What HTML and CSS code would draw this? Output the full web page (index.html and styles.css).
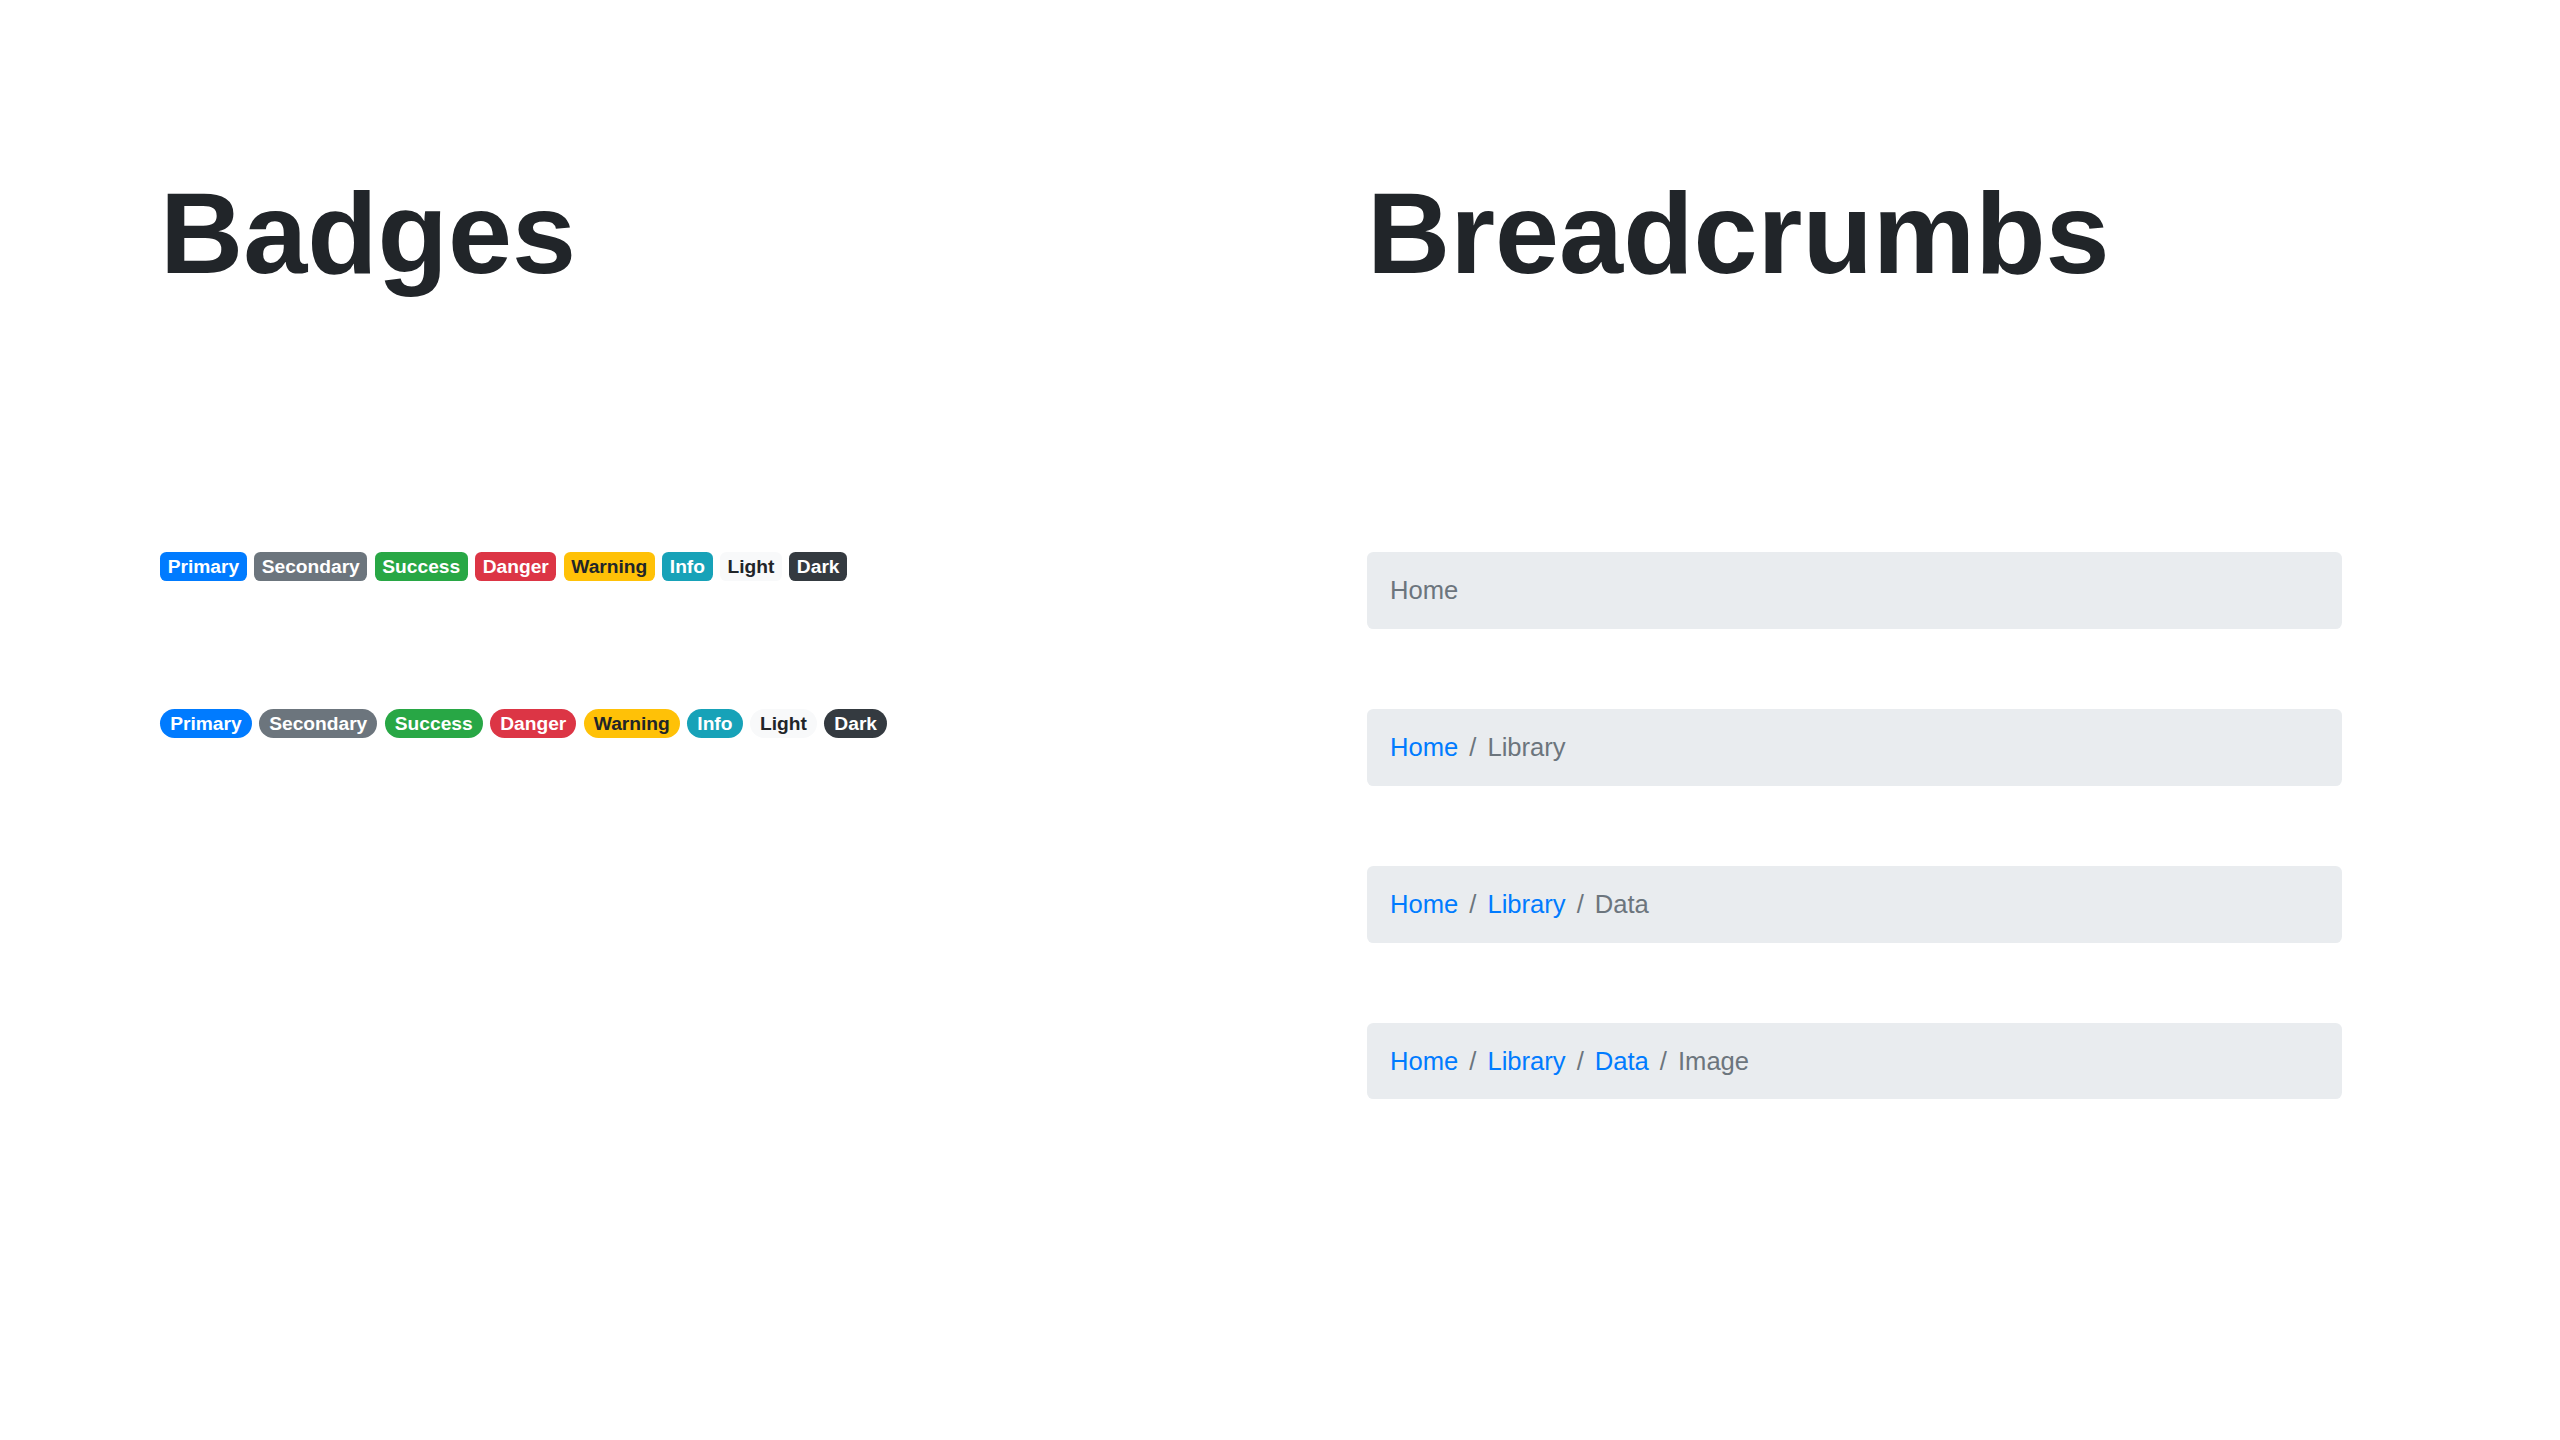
FILE: index.html
```html
<!DOCTYPE html>
<html lang="en">
<head>
    <meta charset="UTF-8">
    <meta name="viewport" content="width=device-width, initial-scale=1.0">
    <title>Badges and Breadcrumbs</title>
    <link rel="stylesheet" href="styles.css">
</head>
<body>
    <div class="page">
        <section class="column">
            <h1>Badges</h1>

            <div class="row">
                <span class="badge badge-primary">Primary</span>
                <span class="badge badge-secondary">Secondary</span>
                <span class="badge badge-success">Success</span>
                <span class="badge badge-danger">Danger</span>
                <span class="badge badge-warning">Warning</span>
                <span class="badge badge-info">Info</span>
                <span class="badge badge-light">Light</span>
                <span class="badge badge-dark">Dark</span>
            </div>

            <div class="row">
                <span class="badge badge-pill badge-primary">Primary</span>
                <span class="badge badge-pill badge-secondary">Secondary</span>
                <span class="badge badge-pill badge-success">Success</span>
                <span class="badge badge-pill badge-danger">Danger</span>
                <span class="badge badge-pill badge-warning">Warning</span>
                <span class="badge badge-pill badge-info">Info</span>
                <span class="badge badge-pill badge-light">Light</span>
                <span class="badge badge-pill badge-dark">Dark</span>
            </div>
        </section>

        <section class="column">
            <h1>Breadcrumbs</h1>

            <ol class="row breadcrumb">
                <li class="breadcrumb-item active">Home</li>
            </ol>

            <ol class="row breadcrumb">
                <li class="breadcrumb-item"><a href="#">Home</a></li>
                <li class="breadcrumb-item active">Library</li>
            </ol>

            <ol class="row breadcrumb">
                <li class="breadcrumb-item"><a href="#">Home</a></li>
                <li class="breadcrumb-item"><a href="#">Library</a></li>
                <li class="breadcrumb-item active">Data</li>
            </ol>

            <ol class="row breadcrumb">
                <li class="breadcrumb-item"><a href="#">Home</a></li>
                <li class="breadcrumb-item"><a href="#">Library</a></li>
                <li class="breadcrumb-item"><a href="#">Data</a></li>
                <li class="breadcrumb-item active">Image</li>
            </ol>
        </section>
    </div>
</body>
</html>
```

FILE: styles.css
```css
:root {
    --text-color: #212529;
    --muted-color: #6c757d;
    --link-color: #007bff;
    --crumb-bg: #e9ecef;
}

body {
    margin: 0;
    font-family: "Liberation Sans", Arial, sans-serif;
    font-size: 25.6px;
    line-height: 1.5;
    color: var(--text-color);
    background: white;
}

.page {
    display: grid;
    grid-template-columns: 975px 975px;
    column-gap: 232px;
    padding: 164px 0 0 160px;
}

h1 {
    margin: 0 0 250px;
    font-size: 115.2px;
    font-weight: 700;
    line-height: 1.2;
}

.row {
    height: 76.8px;
    margin: 0 0 80px;
}

.badge {
    display: inline-block;
    padding: 4.8px 7.7px;
    font-size: 19.2px;
    font-weight: 700;
    line-height: 1;
    white-space: nowrap;
    vertical-align: top;
    border-radius: 6.4px;
}

.badge-pill {
    padding-left: 10.2px;
    padding-right: 10.2px;
    border-radius: 160px;
}

.badge-primary { background: #007bff; color: white; }
.badge-secondary { background: #6c757d; color: white; }
.badge-success { background: #28a745; color: white; }
.badge-danger { background: #dc3545; color: white; }
.badge-warning { background: #ffc107; color: var(--text-color); }
.badge-info { background: #17a2b8; color: white; }
.badge-light { background: #f8f9fa; color: var(--text-color); }
.badge-dark { background: #343a40; color: white; }

.breadcrumb {
    display: flex;
    box-sizing: border-box;
    padding: 19.2px 23px;
    list-style: none;
    background: var(--crumb-bg);
    border-radius: 6.4px;
}

.breadcrumb-item + .breadcrumb-item {
    padding-left: 11px;
}

.breadcrumb-item + .breadcrumb-item::before {
    content: "/";
    padding-right: 11px;
    color: var(--muted-color);
}

.breadcrumb-item a {
    color: var(--link-color);
    text-decoration: none;
}

.breadcrumb-item.active {
    color: var(--muted-color);
}
```
